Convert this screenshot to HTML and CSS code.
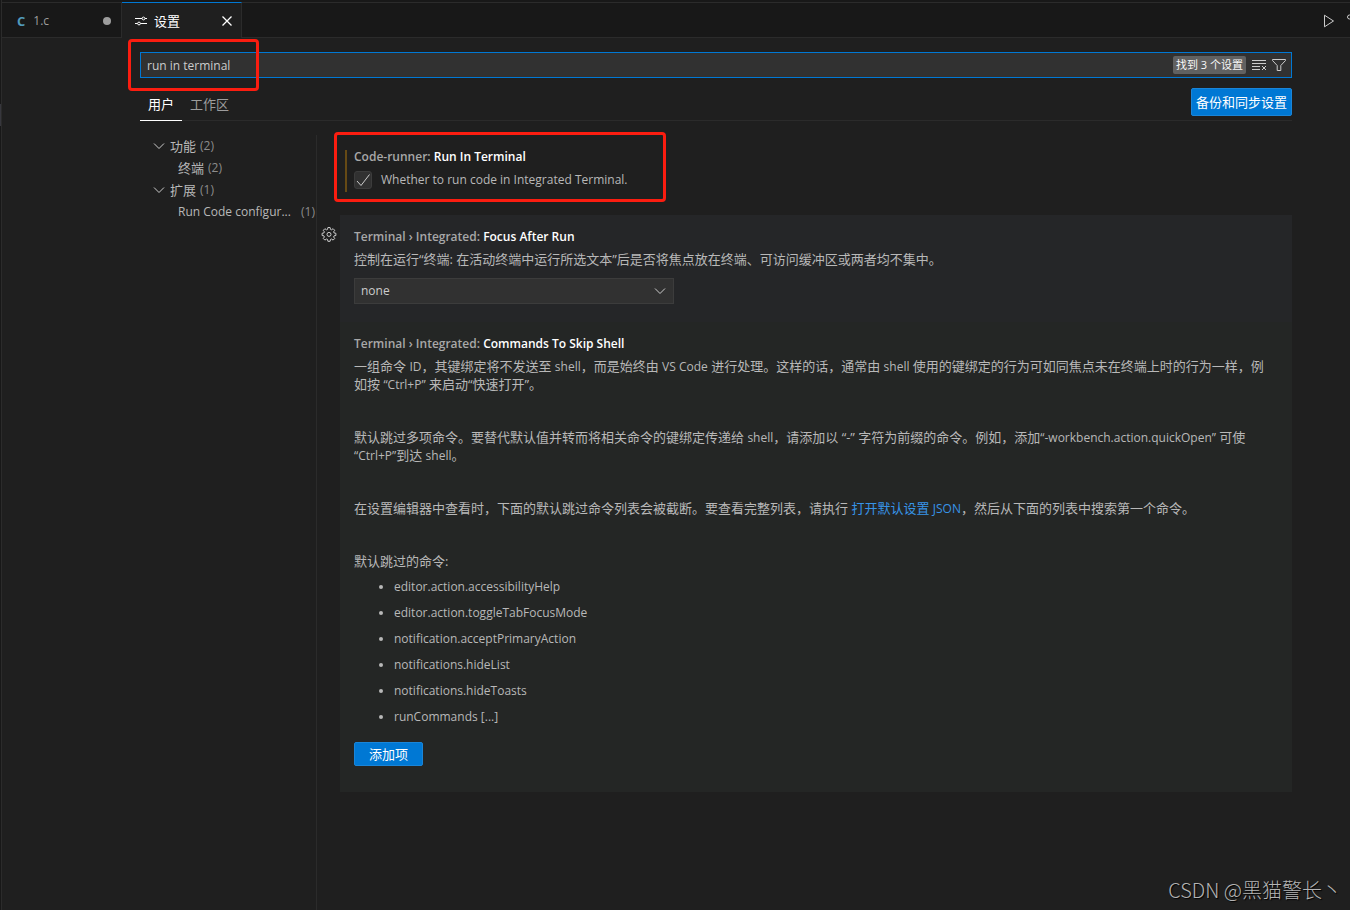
FILE: index.html
```html
<!DOCTYPE html>
<html lang="zh-CN">
<head>
<meta charset="utf-8">
<title>设置</title>
<link rel="stylesheet" href="styles.css">
</head>
<body>
<div class="window">
  <div class="edge"><span class="edge-thumb"></span></div>
  <main class="editor">
    <header class="tabbar">
      <div class="tab">
        <span class="lang">C</span><span class="tab-name latin">1.c</span><span class="dirty"></span>
      </div>
      <div class="tab active">
        <svg class="icon-sliders" width="12" height="12" viewBox="0 0 12 12"><path d="M0 3.500h7M10 3.500h2M0 8.500h2.500M5.500 8.500H12"/><circle cx="8.500" cy="3.500" r="1.400"/><circle cx="4" cy="8.500" r="1.400"/></svg>
        <span class="tab-name">设置</span>
        <button class="icon-btn close" aria-label="关闭"><svg width="12" height="12" viewBox="0 0 12 12"><path d="M1.500 1.500l9 9M10.500 1.500l-9 9"/></svg></button>
      </div>
      <div class="actions">
        <button class="icon-btn" aria-label="运行"><svg width="14" height="16" viewBox="0 0 14 16"><path d="M3.500 2.200v11.600L12.500 8z"/></svg></button>
        <svg class="cut" width="4" height="16" viewBox="0 0 4 16"><circle cx="3.500" cy="4" r="2"/></svg>
      </div>
    </header>

    <section class="settings">
      <div class="search">
        <input class="search-input latin" type="text" aria-label="搜索设置" value="run in terminal">
        <span class="count">找到 3 个设置</span>
        <button class="icon-btn" aria-label="清除搜索"><svg width="16" height="14" viewBox="0 0 16 14"><path d="M1 2.500h14M1 5.500h14M1 8.500h8M1 11.500h8M11 8l4 4M15 8l-4 4"/></svg></button>
        <button class="icon-btn" aria-label="筛选"><svg width="16" height="16" viewBox="0 0 16 16"><path d="M1.500 2.500h13v1L9.800 8.500v5H6.200v-5L1.500 3.500z"/></svg></button>
        <span class="mark mark-search"></span>
      </div>
      <div class="scope">
        <button class="scope-tab selected">用户</button>
        <button class="scope-tab">工作区</button>
        <button class="primary sync">备份和同步设置</button>
      </div>

      <div class="columns">
        <nav class="toc">
          <div class="toc-row"><svg width="12" height="12" viewBox="0 0 12 12"><path d="M1 3.500l5 5 5-5"/></svg><span class="toc-name">功能</span><span class="num latin">(2)</span></div>
          <div class="toc-row child"><span class="toc-name">终端</span><span class="num latin">(2)</span></div>
          <div class="toc-row"><svg width="12" height="12" viewBox="0 0 12 12"><path d="M1 3.500l5 5 5-5"/></svg><span class="toc-name">扩展</span><span class="num latin">(1)</span></div>
          <div class="toc-row child"><span class="toc-name long latin">Run Code configur...</span><span class="num latin">(1)</span></div>
        </nav>

        <div class="list">
          <article class="item first">
            <div class="gutter"></div>
            <div class="card">
              <span class="modified"></span>
              <span class="mark mark-item"></span>
              <h3 class="title latin">Code-runner: <b>Run In Terminal</b></h3>
              <div class="check-row">
                <span class="check"><input type="checkbox" id="run" checked><svg width="16" height="16" viewBox="0 0 16 16"><path d="M2 9l4 4.500L14.500 2.500"/></svg></span>
                <label class="latin" for="run">Whether to run code in Integrated Terminal.</label>
              </div>
            </div>
          </article>

          <article class="item focus">
            <div class="gutter"><button class="icon-btn gear" aria-label="更多操作"><svg width="16" height="16" viewBox="0 0 16 16"><path d="M6.900 1.500h2.200l.4 1.900 1 .4 1.600-1.100 1.600 1.600-1.100 1.600.4 1 1.900.4v2.200l-1.900.4-.4 1 1.100 1.600-1.600 1.600-1.600-1.100-1 .4-.4 1.900H6.900l-.4-1.900-1-.4-1.600 1.100-1.600-1.600 1.100-1.600-.4-1-1.900-.4V7.300l1.900-.4.4-1-1.100-1.600 1.600-1.600 1.600 1.100 1-.4z"/><circle cx="8" cy="8.400" r="2"/></svg></button></div>
            <div class="card">
              <h3 class="title latin">Terminal › Integrated: <b>Focus After Run</b></h3>
              <label class="desc" for="focus-after">控制在运行“终端: 在活动终端中运行所选文本”后是否将焦点放在终端、可访问缓冲区或两者均不集中。</label>
              <div class="select">
                <select class="latin" id="focus-after"><option>none</option></select>
                <svg width="12" height="12" viewBox="0 0 12 12"><path d="M1 3.500l5 5 5-5"/></svg>
              </div>
            </div>
          </article>

          <article class="item hover">
            <div class="gutter"></div>
            <div class="card">
              <h3 class="title latin">Terminal › Integrated: <b>Commands To Skip Shell</b></h3>
              <div class="desc prose">
                <p>一组命令 <span class="latin">ID</span>，其键绑定将不发送至 <span class="latin">shell</span>，而是始终由 <span class="latin">VS Code</span> 进行处理。这样的话，通常由 <span class="latin">shell</span> 使用的键绑定的行为可如同焦点未在终端上时的行为一样，例如按 <span class="latin">“Ctrl+P”</span> 来启动“快速打开”。</p>
                <p>默认跳过多项命令。要替代默认值并转而将相关命令的键绑定传递给 <span class="latin">shell</span>，请添加以 “-” 字符为前缀的命令。例如，添加<span class="latin">“-workbench.action.quickOpen”</span> 可使 <span class="latin">“Ctrl+P”</span>到达 <span class="latin">shell</span>。</p>
                <p>在设置编辑器中查看时，下面的默认跳过命令列表会被截断。要查看完整列表，请执行 <a href="#">打开默认设置 <span class="latin">JSON</span></a>，然后从下面的列表中搜索第一个命令。</p>
                <p>默认跳过的命令:</p>
              </div>
              <ul class="commands latin">
                <li>editor.action.accessibilityHelp</li>
                <li>editor.action.toggleTabFocusMode</li>
                <li>notification.acceptPrimaryAction</li>
                <li>notifications.hideList</li>
                <li>notifications.hideToasts</li>
                <li>runCommands [...]</li>
              </ul>
              <button class="primary add">添加项</button>
            </div>
          </article>
        </div>
      </div>
    </section>
  </main>
  <div class="watermark">CSDN @黑猫警长丶</div>
</div>
</body>
</html>
```
FILE: styles.css
```css
* { box-sizing: border-box; }

body {
  margin: 0;
  background: #1f1f1f;
  color: #b8b8b8;
  font: 13px/18px "Open Sans", "Noto Sans CJK SC", sans-serif;
}

button, input, select { font: inherit; color: inherit; }
svg { fill: none; stroke: #cccccc; stroke-width: 1; flex: none; display: block; }
.latin { font-size: 12px; }

.window {
  position: relative;
  display: flex;
  min-height: 100vh;
  overflow: hidden;
}

.edge { width: 2px; background: #181818; border-right: 1px solid #2b2b2b; padding-top: 104px; }
.edge-thumb { display: block; width: 1px; height: 22px; background: #37373d; }

.editor { flex: 1; min-width: 0; display: flex; flex-direction: column; }

/* tabs */
.tabbar {
  display: flex;
  height: 38px;
  background: #181818;
  border-top: 2px solid #181818;
  box-shadow: inset 0 1px #2b2b2b, inset 0 -1px #2b2b2b;
}
.tab {
  display: flex;
  align-items: center;
  width: 120px;
  padding: 2px 10px 0 15px;
  border-right: 1px solid #2b2b2b;
  color: #9d9d9d;
}
.tab.active {
  padding: 0 8px 0 13px;
  background: #1f1f1f;
  border-top: 1px solid #0078d4;
  color: #ffffff;
}
.tab.active svg { stroke: #ffffff; }
.tab-name { margin-left: 8px; }
.active .tab-name { margin-left: 7px; }
.lang { color: #519aba; font-weight: 700; }
.dirty { width: 8px; height: 8px; margin-left: auto; border-radius: 50%; background: #9d9d9d; }
.close { margin-left: auto; }
.close svg { stroke-width: 1.3; }
.actions { display: flex; align-items: center; gap: 11px; margin-left: auto; padding-top: 2px; }

.icon-btn { display: flex; padding: 0; border: 0; background: none; }

/* header */
.settings { flex: 1; display: flex; flex-direction: column; padding: 14px 58px 0 138px; }
.search {
  position: relative;
  display: flex;
  align-items: center;
  gap: 4px;
  height: 26px;
  padding-right: 4px;
  background: #313131;
  border: 1px solid #0078d4;
}
.search-input {
  flex: 1;
  min-width: 0;
  padding: 2px 6px 0;
  border: 0;
  outline: 0;
  background: none;
  color: #cccccc;
}
.count {
  margin-right: 1px;
  padding: 0 3px;
  border-radius: 2px;
  background: #616161;
  color: #f8f8f8;
  font-size: 11px;
}

.scope { display: flex; height: 43px; border-bottom: 1px solid #2b2b2b; }
.scope-tab {
  height: 43px;
  padding: 10px 8px 0;
  border: 0;
  border-bottom: 1px solid transparent;
  background: none;
  color: #9d9d9d;
}
.scope-tab.selected { color: #ffffff; border-bottom-color: #ffffff; }
.primary {
  border: 1px solid #1a85d8;
  border-radius: 2px;
  background: #0078d4;
  color: #ffffff;
}
.sync { height: 28px; margin: 10px 0 0 auto; padding: 0 4px; }

/* body */
.columns { flex: 1; display: flex; padding-top: 14px; }
.toc { width: 177px; flex: none; border-right: 1px solid #2b2b2b; }
.toc-row { display: flex; align-items: center; height: 22px; padding-left: 13px; }
.toc-row svg { margin-right: 5px; }
.toc-row.child { padding-left: 38px; }
.num { margin-left: 4px; color: #8c8c8c; }
.long { width: 118px; white-space: nowrap; }
.long + .num { margin-left: 5px; }

.list { flex: 1; min-width: 0; }
.item { display: flex; }
.gutter { width: 23px; flex: none; padding: 11px 0 0 4px; }
.card { position: relative; flex: 1; min-width: 0; padding: 13px 20px 18px 14px; }
.first .card { padding-bottom: 26px; }
.focus .card { background: #252628; }
.hover .card { background: #242625; padding-bottom: 26px; }

.title { margin: 0 0 4px; font-weight: 600; line-height: 18px; color: #a8a8a8; }
.title b { font-weight: 600; color: #ffffff; }
.first .title { margin-bottom: 5px; }

.modified { position: absolute; left: 5px; top: 15px; bottom: 23px; width: 2px; background: #664a15; }
.check-row { display: flex; align-items: center; gap: 9px; }
.check { position: relative; width: 18px; height: 18px; }
.check input {
  appearance: none;
  display: block;
  width: 18px;
  height: 18px;
  margin: 0;
  border: 1px solid #3c3c3c;
  border-radius: 3px;
  background: #313131;
}
.check svg { position: absolute; left: 1px; top: 1px; pointer-events: none; }

.desc { display: block; }
.select { position: relative; width: 320px; margin-top: 10px; }
.select select {
  appearance: none;
  display: block;
  width: 100%;
  height: 26px;
  padding: 0 6px;
  border: 1px solid #3c3c3c;
  border-radius: 0;
  background: #313131;
  color: #cccccc;
}
.select svg { position: absolute; right: 8px; top: 7px; pointer-events: none; }

.prose p { margin: 0 0 35px; }
.prose .latin { line-height: 16px; }
.prose p:last-child { margin-bottom: 8px; }
.prose a { color: #3794e8; text-decoration: none; }
.commands { margin: 0 0 16px; padding-left: 40px; }
.commands li + li { margin-top: 8px; }
.add { display: block; height: 24px; padding: 0 14px; }

/* highlight frames */
.mark { position: absolute; border: 3px solid #fb1d10; border-radius: 4px; pointer-events: none; }
.mark-search { left: -13px; top: -14px; width: 131px; height: 52px; }
.mark-item { left: -6px; top: -3px; width: 332px; height: 70px; }

.watermark {
  position: absolute;
  right: 8px;
  bottom: 6px;
  color: #b4b4b4;
  font: 300 20px/28px "Noto Sans CJK SC", sans-serif;
  text-shadow: 1px 1px 1px #000000;
}
```
